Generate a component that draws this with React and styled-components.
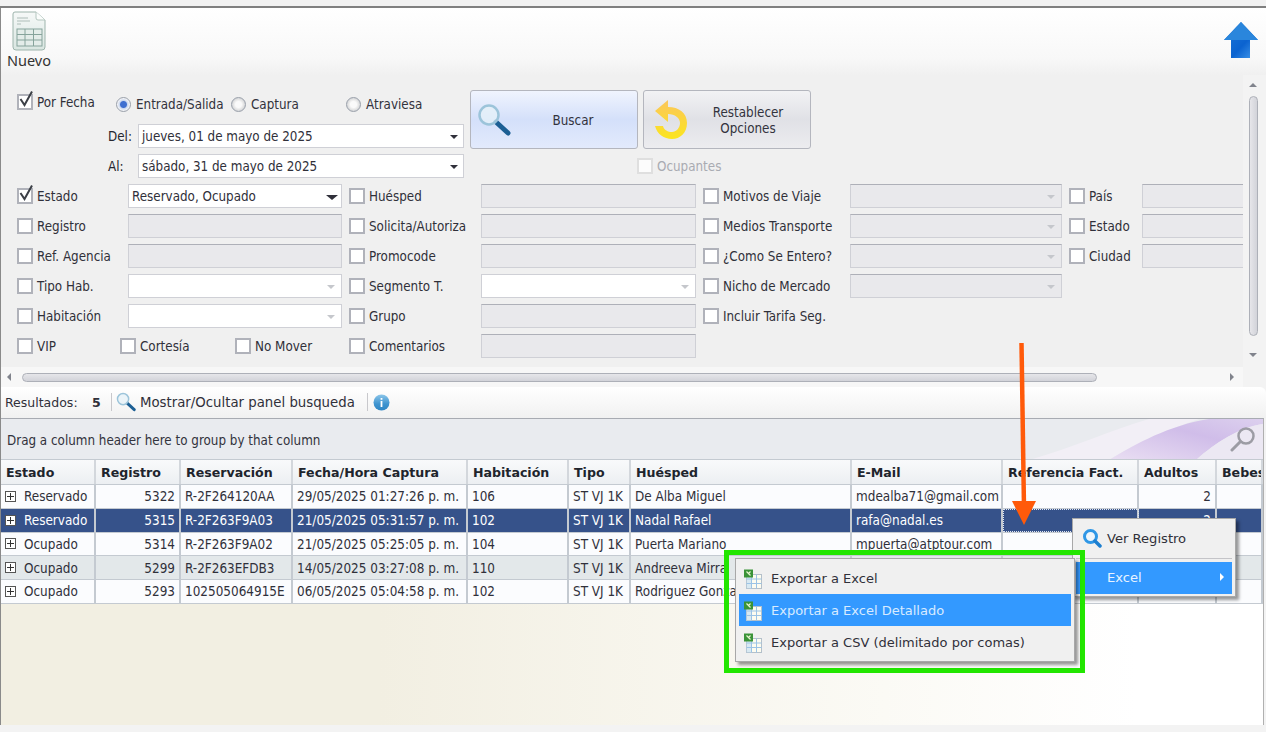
import styled, { createGlobalStyle } from "styled-components";

const GlobalStyle = createGlobalStyle`
  html, body {
    margin: 0;
    padding: 0;
    background: #f3f3f3;
  }
  * {
    box-sizing: border-box;
  }
`;

const COLUMNS = "95px 85px 112px 175px 101px 62px 221px 151px 136px 78px 1fr";

const rows = [
  { estado: "Reservado", registro: "5322", reserva: "R-2F264120AA", fecha: "29/05/2025 01:27:26 p. m.", hab: "106", huesped: "De Alba Miguel", email: "mdealba71@gmail.com", adultos: "2" },
  { estado: "Reservado", registro: "5315", reserva: "R-2F263F9A03", fecha: "21/05/2025 05:31:57 p. m.", hab: "102", huesped: "Nadal Rafael", email: "rafa@nadal.es", adultos: "2", selected: true },
  { estado: "Ocupado", registro: "5314", reserva: "R-2F263F9A02", fecha: "21/05/2025 05:25:05 p. m.", hab: "104", huesped: "Puerta Mariano", email: "mpuerta@atptour.com", adultos: "2" },
  { estado: "Ocupado", registro: "5299", reserva: "R-2F263EFDB3", fecha: "14/05/2025 03:27:08 p. m.", hab: "110", huesped: "Andreeva Mirra", email: "", adultos: "", alt: true },
  { estado: "Ocupado", registro: "5293", reserva: "102505064915E", fecha: "06/05/2025 05:04:58 p. m.", hab: "102", huesped: "Rodriguez Gonzalez", email: "", adultos: "" },
];

const headers = ["Estado", "Registro", "Reservación", "Fecha/Hora Captura", "Habitación", "Tipo", "Huésped", "E-Mail", "Referencia Fact.", "Adultos", "Bebes"];

function DocIcon() {
  return (
    <svg width="34" height="40" viewBox="0 0 34 40">
      <defs>
        <linearGradient id="docFill" x1="0" y1="0" x2="0" y2="1">
          <stop offset="0" stopColor="#f6f9f8" />
          <stop offset="1" stopColor="#d9e6e1" />
        </linearGradient>
      </defs>
      <path d="M3 1 H24 L33 9 V36 Q33 39 30 39 H4 Q1 39 1 36 V3 Q1 1 3 1 Z" fill="url(#docFill)" stroke="#9db4ac" />
      <path d="M24 1 V7 Q24 9 26 9 H33" fill="#fbfdfc" stroke="#b4c6bf" />
      <path d="M5 7 H16 M5 10 H18 M5 13 H9" stroke="#aebdb8" />
      <rect x="5" y="18" width="25" height="17" fill="#e3ece9" stroke="#86a39b" />
      <path d="M5 23.5 H30 M5 29 H30 M13 18 V35 M21.500 18 V35" stroke="#86a39b" />
    </svg>
  );
}

function UpArrow() {
  return (
    <svg width="36" height="38" viewBox="0 0 36 38">
      <defs>
        <linearGradient id="upFill" x1="0" y1="0" x2="1" y2="1">
          <stop offset="0" stopColor="#1f78d8" />
          <stop offset="0.6" stopColor="#0b63d0" />
          <stop offset="1" stopColor="#4ba0ee" />
        </linearGradient>
      </defs>
      <path d="M18 0 L35 18 H27 V36 H8 V18 H1 Z" fill="url(#upFill)" />
      <path d="M18 0 L35 18 H1 Z" fill="#2a86dc" />
    </svg>
  );
}

function GlassIcon({ size = 34 }) {
  return (
    <svg width={size} height={size} viewBox="0 0 34 34">
      <path d="M19 19 L31 30" stroke="#1c5f94" strokeWidth="5" strokeLinecap="round" />
      <circle cx="12" cy="12" r="9.500" fill="#e6f2f8" fillOpacity="0.75" stroke="#9cc4da" strokeWidth="2.500" />
    </svg>
  );
}

function UndoIcon() {
  return (
    <svg width="34" height="42" viewBox="0 0 34 42">
      <defs>
        <linearGradient id="undoFill" x1="0" y1="0" x2="0" y2="1">
          <stop offset="0" stopColor="#fbc65c" />
          <stop offset="1" stopColor="#fbe51e" />
        </linearGradient>
      </defs>
      <path d="M14 1 V8 C25 8 33 14 33 24 C33 34 26 40 18 40 C10 40 3 35 1 27 H9 C10 31 14 33 18 33 C22 33 26 29 26 24 C26 19 21 15 14 15 V23 L1 12 Z" fill="url(#undoFill)" />
    </svg>
  );
}

function InfoIcon() {
  return (
    <svg width="17" height="17" viewBox="0 0 17 17">
      <defs>
        <linearGradient id="infoFill" x1="0" y1="0" x2="0" y2="1">
          <stop offset="0" stopColor="#8cc6ea" />
          <stop offset="0.6" stopColor="#3d93cf" />
          <stop offset="1" stopColor="#2f86c4" />
        </linearGradient>
      </defs>
      <circle cx="8.500" cy="8.500" r="8" fill="url(#infoFill)" />
      <rect x="7.600" y="7" width="1.800" height="6" fill="#fff" />
      <rect x="7.600" y="4" width="1.800" height="1.800" fill="#fff" />
    </svg>
  );
}

function ExcelIcon() {
  return (
    <svg width="20" height="20" viewBox="0 0 20 20">
      <rect x="3.500" y="5.500" width="15" height="14" fill="#fdfcf0" stroke="#b4c0ca" />
      <rect x="3.500" y="5.500" width="5" height="14" fill="#bfdcf3" fillOpacity="0.6" />
      <path d="M3.500 10 H18.500 M3.500 14.500 H18.500 M8.500 5.500 V19.500 M13.500 5.500 V19.500" stroke="#9cc4e6" />
      <rect x="1" y="0.500" width="9" height="8" fill="#3a9338" />
      <path d="M3.500 2.500 L7.500 6.500 M7.500 2.500 L5 5" stroke="#e8f6d0" strokeWidth="1.200" />
    </svg>
  );
}

function BlueGlass() {
  return (
    <svg width="20" height="20" viewBox="0 0 20 20">
      <circle cx="8.500" cy="8.500" r="6" fill="#eef6fc" stroke="#2f97e6" strokeWidth="3" />
      <path d="M13 13 L18 18" stroke="#1c7fd0" strokeWidth="3.500" strokeLinecap="round" />
    </svg>
  );
}

function GreyGlass() {
  return (
    <svg width="26" height="26" viewBox="0 0 26 26">
      <circle cx="16" cy="10" r="7.500" fill="none" stroke="#9c9ca4" strokeWidth="2.500" />
      <path d="M10.500 15.500 L2 24" stroke="#9c9ca4" strokeWidth="3" strokeLinecap="round" />
    </svg>
  );
}

function Swoosh() {
  return (
    <SwooshArt width="264" height="41" viewBox="0 0 264 41" preserveAspectRatio="none">
      <defs>
        <linearGradient id="swooshA" x1="0" y1="1" x2="1" y2="0">
          <stop offset="0" stopColor="#eadff3" />
          <stop offset="0.6" stopColor="#d0bde9" />
          <stop offset="1" stopColor="#dcd0ee" />
        </linearGradient>
      </defs>
      <path d="M30 41 C70 30 110 12 150 0 H200 C170 10 130 28 110 41 Z" fill="#f2eff6" />
      <path d="M110 41 C135 26 170 6 210 0 H264 V5 C240 8 215 25 197 41 Z" fill="url(#swooshA)" />
      <path d="M197 41 C215 25 240 8 264 5 V41 Z" fill="#ece8f3" />
    </SwooshArt>
  );
}

function Check({ checked, disabled, children, dim }) {
  return (
    <CheckWrap>
      <CheckBox $disabled={disabled}>
        {checked && (
          <CheckMark width="16" height="18" viewBox="0 0 16 18">
            <path d="M2.500 9 L6.500 15 L14 1.500" fill="none" stroke="#3b3f46" strokeWidth="2" />
          </CheckMark>
        )}
      </CheckBox>
      <CheckLabel $dim={dim}>{children}</CheckLabel>
    </CheckWrap>
  );
}

function Radio({ on, children, width }) {
  return (
    <RadioWrap style={{ width }}>
      <RadioDot $on={on} />
      <RadioText>{children}</RadioText>
    </RadioWrap>
  );
}

function Combo({ children, size, small }) {
  return (
    <ComboBox $size={size}>
      <span>{children}</span>
      <Caret $small={small} />
    </ComboBox>
  );
}

function Field({ white, arrow, width, clipped }) {
  return (
    <FieldBox $white={white} $width={width} $clipped={clipped}>
      {arrow && <Caret $soft />}
    </FieldBox>
  );
}

export default function App() {
  return (
    <Page>
      <GlobalStyle />
      <TopStrip />
      <Frame>
        <Toolbar>
          <NewButton>
            <DocIcon />
            <span>Nuevo</span>
          </NewButton>
          <ArrowSlot>
            <UpArrow />
          </ArrowSlot>
        </Toolbar>

        <SearchPanel>
          <FormArea>
            <DateBlock>
              <DateLeft>
                <RadioRow>
                  <PorFecha>
                    <Check checked>Por Fecha</Check>
                  </PorFecha>
                  <Radio on width="115px">Entrada/Salida</Radio>
                  <Radio width="115px">Captura</Radio>
                  <Radio>Atraviesa</Radio>
                </RadioRow>
                <DateRow>
                  <DateLabel>Del:</DateLabel>
                  <Combo size="326px" small>jueves, 01 de mayo de 2025</Combo>
                </DateRow>
                <DateRow>
                  <DateLabel>Al:</DateLabel>
                  <Combo size="326px" small>sábado, 31 de mayo de 2025</Combo>
                </DateRow>
              </DateLeft>
              <DateRight>
                <ButtonRow>
                  <BigButton $primary>
                    <GlassIcon />
                    <BigButtonText>Buscar</BigButtonText>
                  </BigButton>
                  <BigButton>
                    <UndoIcon />
                    <BigButtonText>Restablecer<br />Opciones</BigButtonText>
                  </BigButton>
                </ButtonRow>
                <OcupantesRow>
                  <Check disabled dim>Ocupantes</Check>
                </OcupantesRow>
              </DateRight>
            </DateBlock>

            <FilterGrid>
              <Check checked>Estado</Check>
              <Combo size="214px">Reservado, Ocupado</Combo>
              <Check>Huésped</Check>
              <Field width="215px" />
              <Check>Motivos de Viaje</Check>
              <Field arrow width="212px" />
              <Check>País</Check>
              <Field clipped />

              <Check>Registro</Check>
              <Field />
              <Check>Solicita/Autoriza</Check>
              <Field width="215px" />
              <Check>Medios Transporte</Check>
              <Field arrow width="212px" />
              <Check>Estado</Check>
              <Field clipped />

              <Check>Ref. Agencia</Check>
              <Field />
              <Check>Promocode</Check>
              <Field width="215px" />
              <Check>¿Como Se Entero?</Check>
              <Field arrow width="212px" />
              <Check>Ciudad</Check>
              <Field clipped />

              <Check>Tipo Hab.</Check>
              <Field white arrow />
              <Check>Segmento T.</Check>
              <Field white arrow width="215px" />
              <Check>Nicho de Mercado</Check>
              <Field arrow width="212px" />
              <Blank />
              <Blank />

              <Check>Habitación</Check>
              <Field white arrow />
              <Check>Grupo</Check>
              <Field width="215px" />
              <Check>Incluir Tarifa Seg.</Check>
              <Blank />
              <Blank />
              <Blank />

              <CheckTrio>
                <Check>VIP</Check>
                <Check>Cortesía</Check>
                <Check>No Mover</Check>
              </CheckTrio>
              <Check>Comentarios</Check>
              <Field width="215px" />
            </FilterGrid>
          </FormArea>

          <VScroll>
            <ArrowUp />
            <VThumb />
            <ArrowDown />
          </VScroll>
          <HScroll>
            <ArrowLeft />
            <HThumb />
            <ArrowRight />
          </HScroll>
          <ScrollCorner />
        </SearchPanel>

        <ResultsBar>
          <span>Resultados:</span>
          <ResultCount>5</ResultCount>
          <BarDivider />
          <GlassIcon size={20} />
          <span>Mostrar/Ocultar panel busqueda</span>
          <BarDivider $spaced />
          <InfoIcon />
        </ResultsBar>

        <DataGrid>
          <GroupPanel>
            <span>Drag a column header here to group by that column</span>
            <Swoosh />
            <GlassSlot>
              <GreyGlass />
            </GlassSlot>
          </GroupPanel>
          <HeaderRow>
            {headers.map((h) => (
              <HeaderCell key={h}>{h}</HeaderCell>
            ))}
          </HeaderRow>
          {rows.map((r) => (
            <Row key={r.registro} $selected={r.selected} $alt={r.alt}>
              <Cell>
                <Expander>
                  <ExpanderPlus />
                </Expander>
                {r.estado}
              </Cell>
              <Cell $right>{r.registro}</Cell>
              <Cell>{r.reserva}</Cell>
              <Cell>{r.fecha}</Cell>
              <Cell>{r.hab}</Cell>
              <Cell>ST VJ 1K</Cell>
              <Cell>{r.huesped}</Cell>
              <Cell>{r.email}</Cell>
              <Cell $focus={r.selected} />
              <Cell $right>{r.adultos}</Cell>
              <Cell />
            </Row>
          ))}
          <EmptyArea />
        </DataGrid>
      </Frame>
      <BottomStrip />

      <OrangeArrow width="28" height="186" viewBox="0 0 28 186">
        <path d="M11.500 0 L14 165" stroke="#ff5a0a" strokeWidth="4.500" />
        <path d="M2 158 H26 L14 182 Z" fill="#ff5a0a" />
      </OrangeArrow>

      <ContextMenu>
        <MenuRow>
          <BlueGlass />
          <span>Ver Registro</span>
        </MenuRow>
        <MenuLine />
        <MenuRow $active>
          <MenuIndent />
          <span>Excel</span>
          <SubArrow />
        </MenuRow>
      </ContextMenu>

      <GreenBox />

      <SubMenu>
        <SubItem>
          <ExcelIcon />
          <span>Exportar a Excel</span>
        </SubItem>
        <SubItem $active>
          <ExcelIcon />
          <span>Exportar a Excel Detallado</span>
        </SubItem>
        <SubItem>
          <ExcelIcon />
          <span>Exportar a CSV (delimitado por comas)</span>
        </SubItem>
      </SubMenu>
    </Page>
  );
}

const Page = styled.div`
  position: relative;
  width: 1266px;
  height: 732px;
  overflow: hidden;
  background: #f3f3f3;
  color: #26262e;
  font-family: "DejaVu Sans", sans-serif;
  font-stretch: condensed;
  font-size: 13.300px;
`;

const TopStrip = styled.div`
  height: 8px;
  background: #f2f2f2;
  border-bottom: 2px solid #808080;
`;

const BottomStrip = styled.div`
  height: 7px;
  background: #f3f3f3;
`;

const Frame = styled.div`
  display: flex;
  flex-direction: column;
  height: 717px;
  border-left: 1px solid #8a8a8a;
`;

const Toolbar = styled.div`
  display: flex;
  justify-content: space-between;
  height: 67px;
  background: linear-gradient(#ffffff 0%, #f8f8f8 75%, #f0f0f0 100%);
`;

const NewButton = styled.div`
  display: flex;
  flex-direction: column;
  align-items: center;
  width: 44px;
  margin-left: 6px;
  padding-top: 3px;
  color: #333;

  span {
    margin-top: 1px;
    line-height: 16px;
    font-family: "Noto Sans", sans-serif;
    font-stretch: normal;
    font-size: 14.500px;
  }
`;

const ArrowSlot = styled.div`
  padding: 14px 7px 0 0;
`;

const SearchPanel = styled.div`
  display: grid;
  grid-template-columns: 1242px 1fr;
  grid-template-rows: 292px 20px;
  background: #f0f0f0;
`;

const FormArea = styled.div`
  overflow: hidden;
  padding: 15px 0 0 16px;
`;

const DateBlock = styled.div`
  display: flex;
  height: 94px;
`;

const DateLeft = styled.div`
  width: 453px;
`;

const RadioRow = styled.div`
  display: flex;
  align-items: center;
  height: 28px;
  margin-bottom: 6px;
`;

const PorFecha = styled.div`
  width: 99px;
  margin-top: -4px;
`;

const RadioWrap = styled.label`
  display: flex;
  align-items: center;
  gap: 5px;
  color: #33333d;
`;

const RadioText = styled.span`
  padding-top: 1px;
`;

const RadioDot = styled.span`
  flex: none;
  width: 15px;
  height: 15px;
  border-radius: 50%;
  border: 1px solid #9aa0aa;
  background: ${(p) =>
    p.$on
      ? "radial-gradient(circle, #3f6fd0 0 3px, #c9d6ee 4px, #f0f2f6 6px)"
      : "radial-gradient(circle, #fafafa 0 3px, #e6e6e6 5px, #cfd2d6 7px)"};
`;

const DateRow = styled.div`
  display: flex;
  align-items: center;
  height: 24px;
  margin-bottom: 6px;
  padding-left: 91px;
`;

const DateLabel = styled.span`
  width: 30px;
  padding-top: 1px;
`;

const ComboBox = styled.div`
  position: relative;
  display: flex;
  align-items: center;
  width: ${(p) => p.$size};
  height: 24px;
  padding: 1px 0 0 3px;
  background: #fff;
  border: 1px solid #cfd0d6;
  color: #30303a;
`;

const Caret = styled.i`
  position: absolute;
  right: ${(p) => (p.$soft ? "6px" : p.$small ? "5px" : "3px")};
  top: 10px;
  border-style: solid;
  border-width: ${(p) => (p.$small || p.$soft ? "4px 4px 0" : "5px 6px 0")};
  border-color: ${(p) => (p.$soft ? "#c5c7cc" : "#30303a")} transparent transparent;
`;

const DateRight = styled.div`
  display: flex;
  flex-direction: column;
`;

const ButtonRow = styled.div`
  display: flex;
  gap: 5px;
`;

const BigButton = styled.div`
  display: flex;
  align-items: center;
  width: 168px;
  height: 59px;
  padding-left: ${(p) => (p.$primary ? "6px" : "10px")};
  border: 1px solid #b4b6be;
  border-radius: 3px;
  background: ${(p) =>
    p.$primary
      ? "linear-gradient(#f0f4fe, #d4e0fa 50%, #e2eafc)"
      : "linear-gradient(#f2f2f4, #e0e1e6 50%, #ececef)"};
`;

const BigButtonText = styled.div`
  flex: 1;
  padding: 3px 2px 0 0;
  text-align: center;
  line-height: 16px;
  color: #33333d;
`;

const OcupantesRow = styled.div`
  margin: 9px 0 0 167px;
`;

const FilterGrid = styled.div`
  display: grid;
  grid-template-columns: 111px 221px 132px 222px 147px 219px 73px 101px;
  grid-auto-rows: 24px;
  row-gap: 6px;
  align-items: center;
`;

const CheckWrap = styled.div`
  display: flex;
  align-items: center;
  gap: 4px;
`;

const CheckBox = styled.span`
  position: relative;
  flex: none;
  width: 16px;
  height: 16px;
  background: #fff;
  border: 2px solid ${(p) => (p.$disabled ? "#dcdcdc" : "#b0b2ba")};
  opacity: ${(p) => (p.$disabled ? 0.8 : 1)};
`;

const CheckMark = styled.svg`
  position: absolute;
  left: -1px;
  top: -6px;
`;

const CheckLabel = styled.span`
  padding-top: 1px;
  white-space: nowrap;
  color: ${(p) => (p.$dim ? "#a9abb2" : "#30303a")};
`;

const FieldBox = styled.div`
  position: relative;
  width: ${(p) => p.$width || (p.$clipped ? "101px" : "214px")};
  height: 24px;
  background: ${(p) => (p.$white ? "#fff" : "#e9e9ec")};
  border: 1px solid #cfd0d6;
  border-top-color: ${(p) => (p.$white ? "#cfd0d6" : "#aeb0b8")};
  border-right: ${(p) => (p.$clipped ? "none" : "1px solid #cfd0d6")};
`;

const Blank = styled.span``;

const CheckTrio = styled.div`
  grid-column: span 2;
  display: grid;
  grid-template-columns: 103px 115px auto;
`;

const VScroll = styled.div`
  grid-column: 2;
  grid-row: 1;
  display: flex;
  flex-direction: column;
  align-items: center;
  padding: 8px 3px 0 0;
  background: #f3f3f3;
`;

const ArrowUp = styled.i`
  border-style: solid;
  border-width: 0 4px 4px;
  border-color: transparent transparent #80838c;
`;

const ArrowDown = styled.i`
  margin-top: 17px;
  border-style: solid;
  border-width: 4px 4px 0;
  border-color: #80838c transparent transparent;
`;

const VThumb = styled.div`
  flex: none;
  width: 9px;
  height: 240px;
  margin-top: 9px;
  border: 1px solid #adb0b8;
  border-radius: 5px;
  background: linear-gradient(90deg, #e6e6ea, #d2d3d9);
`;

const HScroll = styled.div`
  grid-column: 1;
  grid-row: 2;
  display: flex;
  align-items: center;
  padding-left: 6px;
  background: #f7f7f7;
`;

const ArrowLeft = styled.i`
  border-style: solid;
  border-width: 4px 4px 4px 0;
  border-color: transparent #80838c transparent transparent;
`;

const ArrowRight = styled.i`
  margin-left: 133px;
  border-style: solid;
  border-width: 4px 0 4px 4px;
  border-color: transparent transparent transparent #80838c;
`;

const HThumb = styled.div`
  width: 1075px;
  height: 9px;
  margin-left: 11px;
  border: 1px solid #adb0b8;
  border-radius: 5px;
  background: linear-gradient(#e6e6ea, #d2d3d9);
`;

const ScrollCorner = styled.div`
  grid-column: 2;
  grid-row: 2;
  background: #f3f3f3;
`;

const ResultsBar = styled.div`
  display: flex;
  align-items: center;
  gap: 4px;
  height: 31px;
  padding: 0 0 1px 4px;
  background: linear-gradient(#ffffff, #f1f1f1);
  border-top-right-radius: 6px;
  color: #30303a;
  font-stretch: normal;
  font-size: 13.300px;

  > span:first-child {
    width: 83px;
    font-size: 12.500px;
  }
`;

const ResultCount = styled.b`
  width: 15px;
  font-size: 12.500px;
  font-stretch: normal;
`;

const BarDivider = styled.i`
  width: 1px;
  height: 18px;
  margin-left: ${(p) => (p.$spaced ? "8px" : "0")};
  margin-right: ${(p) => (p.$spaced ? "1px" : "0")};
  background: #c8c8cc;
`;

const DataGrid = styled.div`
  flex: 1;
  display: flex;
  flex-direction: column;
  border-top: 1px solid #a8abb2;
  border-right: 1px solid #b0b0b0;
  margin-right: 2px;
`;

const GroupPanel = styled.div`
  position: relative;
  display: flex;
  align-items: center;
  height: 40px;
  padding: 2px 0 0 6px;
  background: #e9ebef;
  overflow: hidden;
  color: #33333d;
`;

const SwooshArt = styled.svg`
  position: absolute;
  right: 0;
  top: 0;
`;

const GlassSlot = styled.div`
  position: absolute;
  right: 7px;
  top: 7px;
`;

const HeaderRow = styled.div`
  display: grid;
  grid-template-columns: ${COLUMNS};
  height: 26px;
  background: linear-gradient(#f9fafb, #eceff2);
  border-top: 1px solid #c4cad1;
  border-bottom: 1px solid #c4cad1;
`;

const HeaderCell = styled.div`
  display: flex;
  align-items: center;
  padding-left: 5px;
  border-right: 2px solid #d3d7dc;
  font-weight: 700;
  font-stretch: normal;
  font-size: 12.600px;
  color: #20242c;
  white-space: nowrap;
  overflow: hidden;
`;

const Row = styled.div`
  display: grid;
  grid-template-columns: ${COLUMNS};
  height: 23.750px;
  flex: none;
  border-bottom: 1px solid #c4cad1;
  background: ${(p) => (p.$selected ? "#36528a" : p.$alt ? "#e3e8ea" : "#fbfcfe")};
  color: ${(p) => (p.$selected ? "#ffffff" : "#30303a")};
  font-size: 13.400px;
`;

const Cell = styled.div`
  display: flex;
  align-items: center;
  justify-content: ${(p) => (p.$right ? "flex-end" : "flex-start")};
  padding: 1px 4px 0;
  border-right: 2px solid #c4cad1;
  outline: ${(p) => (p.$focus ? "1px dotted #dfe6f2" : "none")};
  outline-offset: -1px;
  white-space: nowrap;
  overflow: hidden;
`;

const Expander = styled.span`
  position: relative;
  flex: none;
  width: 11px;
  height: 11px;
  margin: -1px 8px 0 0;
  border: 1px solid #555;
  background: #fff;
`;

const ExpanderPlus = styled.i`
  position: absolute;
  left: 1px;
  top: 1px;
  width: 7px;
  height: 7px;
  background:
    linear-gradient(#333, #333) center / 7px 1px no-repeat,
    linear-gradient(#333, #333) center / 1px 7px no-repeat;
`;

const EmptyArea = styled.div`
  flex: 1;
  background: linear-gradient(90deg, #f2efe2 0%, #f2efe2 30%, #fbfaf5 70%, #ffffff 90%);
`;

const OrangeArrow = styled.svg`
  position: absolute;
  left: 1010px;
  top: 343px;
`;

const ContextMenu = styled.div`
  position: absolute;
  left: 1072px;
  top: 518px;
  width: 164px;
  height: 79px;
  padding: 2px 3px;
  background: #f0f0f0;
  border: 1px solid #a8a8a8;
  box-shadow: 3px 3px 3px rgba(0, 0, 0, 0.4);
  font-stretch: normal;
  font-size: 13.100px;
`;

const MenuRow = styled.div`
  position: relative;
  display: flex;
  align-items: center;
  gap: 5px;
  height: ${(p) => (p.$active ? "32px" : "35px")};
  padding: 0 0 1px 6px;
  background: ${(p) => (p.$active ? "#3399ff" : "transparent")};
  color: ${(p) => (p.$active ? "#e8f3ff" : "#30303a")};
`;

const MenuIndent = styled.span`
  width: 20px;
`;

const MenuLine = styled.div`
  height: 1px;
  margin: 2px 0 3px;
  background: #c4c4c8;
`;

const SubArrow = styled.i`
  position: absolute;
  right: 8px;
  top: 11px;
  border-style: solid;
  border-width: 4px 0 4px 4px;
  border-color: transparent transparent transparent #fff;
`;

const GreenBox = styled.div`
  position: absolute;
  left: 724px;
  top: 550px;
  width: 361px;
  height: 123px;
  border: 5px solid #22e600;
`;

const SubMenu = styled.div`
  position: absolute;
  left: 735px;
  top: 558px;
  width: 340px;
  height: 104px;
  padding: 3px;
  display: flex;
  flex-direction: column;
  background: #f0f0f0;
  border: 1px solid #a8a8a8;
  box-shadow: 3px 3px 3px rgba(0, 0, 0, 0.4);
  font-stretch: normal;
  font-size: 13px;
`;

const SubItem = styled.div`
  display: flex;
  align-items: center;
  gap: 8px;
  height: 33px;
  padding: 1px 0 0 4px;
  background: ${(p) => (p.$active ? "#3399ff" : "transparent")};
  color: ${(p) => (p.$active ? "#d8ebff" : "#30303a")};
`;
